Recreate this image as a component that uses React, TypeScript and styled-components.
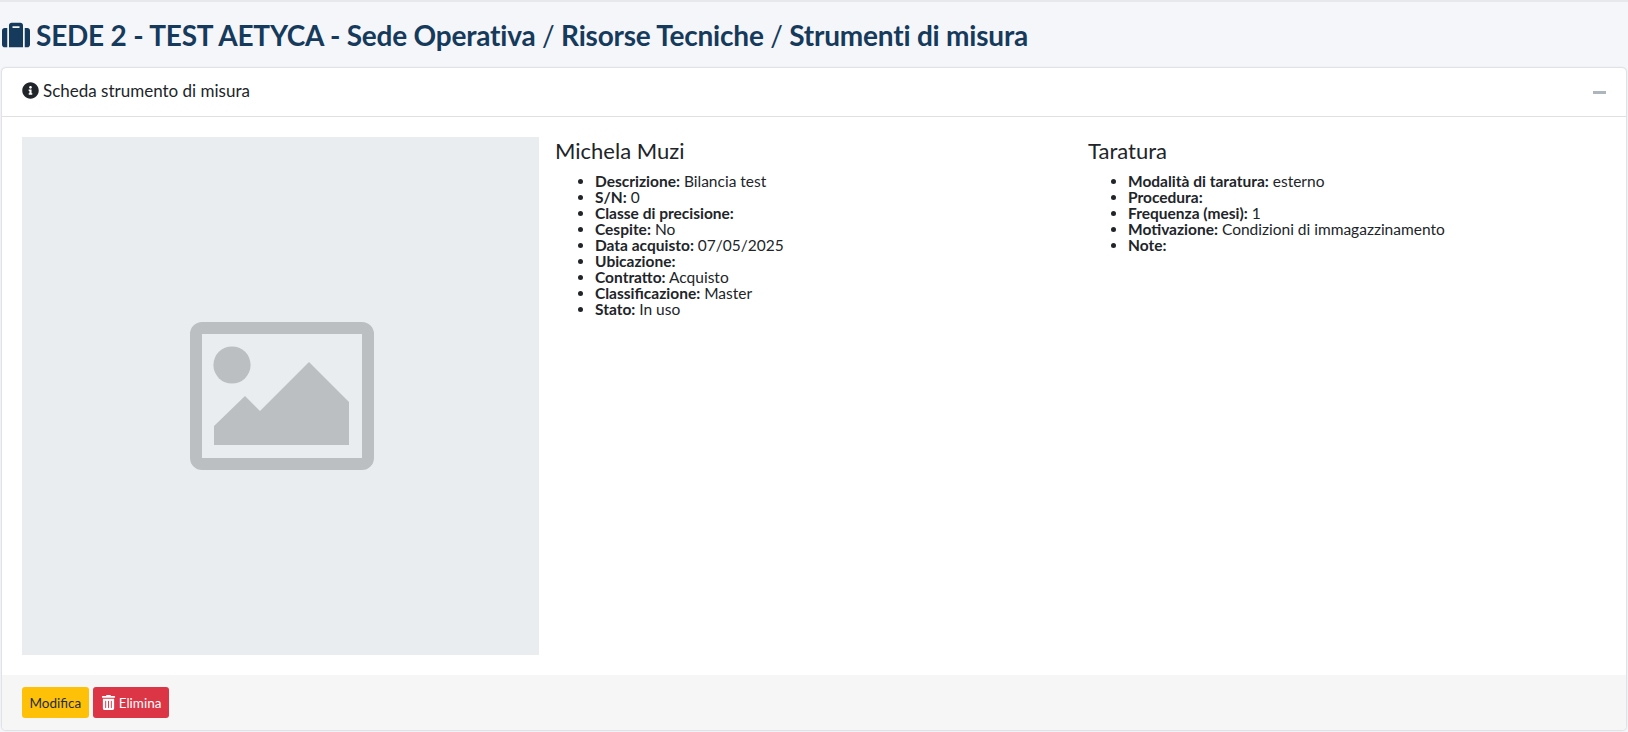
import React from 'react';
import styled, { createGlobalStyle } from 'styled-components';
import { FaSuitcase, FaInfoCircle, FaTrashAlt } from 'react-icons/fa';

const GlobalStyle = createGlobalStyle`
  html, body {
    margin: 0;
    padding: 0;
    background-color: #f4f6f9;
  }
  body {
    font-family: Lato, 'Noto Sans', sans-serif;
    color: #212529;
  }
`;

const Page = styled.div`
  width: 1628px;
  height: 732px;
  box-sizing: border-box;
  display: flex;
  flex-direction: column;
  border-top: 2px solid #e6e8ec;
  padding: 0 2px 2px;
  overflow: hidden;
`;

const PageTitle = styled.h1`
  margin: 0;
  height: 66px;
  display: flex;
  align-items: center;
  gap: 6px;
  font-size: 28px;
  font-weight: 700;
  letter-spacing: -0.21px;
  color: #163a5c;
  white-space: pre;
  flex: none;

  svg {
    font-size: 28px;
    flex: none;
  }
`;

const Light = styled.span`
  font-weight: 400;
`;

const Card = styled.section`
  flex: 1;
  display: flex;
  flex-direction: column;
  background: #fff;
  border-radius: 4px;
  box-shadow: 0 0 2px rgba(0, 0, 0, 0.3);
`;

const CardHeader = styled.header`
  height: 49px;
  flex: none;
  box-sizing: border-box;
  display: flex;
  align-items: center;
  justify-content: space-between;
  padding: 0 20px 3px;
  border-bottom: 1px solid #dfe0e1;
  font-size: 17px;
`;

const HeaderTitle = styled.div`
  display: flex;
  align-items: center;
  gap: 4px;

  svg {
    font-size: 17px;
  }
`;

const Collapse = styled.span`
  width: 13px;
  height: 3px;
  margin-top: 3px;
  background: #adb5bd;
`;

const CardBody = styled.div`
  flex: 1;
  display: grid;
  grid-template-columns: 517px 517px 518px;
  column-gap: 16px;
  align-content: start;
  padding: 20px 20px;
`;

const Placeholder = styled.div`
  height: 518px;
  background: #e9edf0;
  display: flex;
  align-items: center;
  justify-content: center;

  svg {
    margin-left: 2px;
  }
`;

const Info = styled.div``;

const InfoTitle = styled.h5`
  margin: 0 0 9px;
  font-size: 22px;
  font-weight: 400;
  line-height: 27px;
`;

const InfoList = styled.ul`
  margin: 0;
  padding: 0 0 0 40px;
  font-size: 15.5px;
  line-height: 16px;

  b {
    font-weight: 700;
  }
`;

const CardFooter = styled.footer`
  height: 55px;
  flex: none;
  box-sizing: border-box;
  display: flex;
  align-items: center;
  gap: 4px;
  padding: 0 20px;
  background: #f6f6f6;
  border-radius: 0 0 4px 4px;
`;

const Button = styled.button<{ $tone: 'warning' | 'danger' }>`
  height: 31px;
  box-sizing: border-box;
  border: 0;
  border-radius: 3px;
  padding: 0 ${({ $tone }) => ($tone === 'warning' ? '7.5px' : '8px')};
  display: flex;
  align-items: center;
  gap: 3px;
  font-family: inherit;
  font-size: 13.5px;
  background: ${({ $tone }) => ($tone === 'warning' ? '#ffc107' : '#dc3545')};
  color: ${({ $tone }) => ($tone === 'warning' ? '#1f2d3d' : '#fff')};

  svg {
    font-size: 15px;
  }
`;

const ImageIcon = () => (
  <svg width="184" height="148" viewBox="0 0 184 148">
    <rect x="6" y="6" width="172" height="136" rx="6" fill="none" stroke="#bbbfc2" strokeWidth="12" />
    <circle cx="42" cy="43" r="18.6" fill="#bbbfc2" />
    <polygon points="24,104 55,74 70,89 119,40 159,80 159,123 24,123" fill="#bbbfc2" />
  </svg>
);

const details = [
  ['Descrizione:', 'Bilancia test'],
  ['S/N:', '0'],
  ['Classe di precisione:', ''],
  ['Cespite:', 'No'],
  ['Data acquisto:', '07/05/2025'],
  ['Ubicazione:', ''],
  ['Contratto:', 'Acquisto'],
  ['Classificazione:', 'Master'],
  ['Stato:', 'In uso'],
];

const calibration = [
  ['Modalità di taratura:', 'esterno'],
  ['Procedura:', ''],
  ['Frequenza (mesi):', '1'],
  ['Motivazione:', 'Condizioni di immagazzinamento'],
  ['Note:', ''],
];

const Rows = ({ rows }: { rows: string[][] }) => (
  <InfoList>
    {rows.map(([label, value]) => (
      <li key={label}>
        <b>{label}</b> {value}
      </li>
    ))}
  </InfoList>
);

export default function App() {
  return (
    <>
      <GlobalStyle />
      <Page>
        <PageTitle>
          <FaSuitcase />
          <span>
            SEDE 2 - TEST AETYCA - Sede Operativa <Light>/</Light> Risorse Tecniche <Light>/</Light> Strumenti di misura
          </span>
        </PageTitle>
        <Card>
          <CardHeader>
            <HeaderTitle>
              <FaInfoCircle />
              Scheda strumento di misura
            </HeaderTitle>
            <Collapse />
          </CardHeader>
          <CardBody>
            <Placeholder>
              <ImageIcon />
            </Placeholder>
            <Info>
              <InfoTitle>Michela Muzi</InfoTitle>
              <Rows rows={details} />
            </Info>
            <Info>
              <InfoTitle>Taratura</InfoTitle>
              <Rows rows={calibration} />
            </Info>
          </CardBody>
          <CardFooter>
            <Button $tone="warning">Modifica</Button>
            <Button $tone="danger">
              <FaTrashAlt />
              Elimina
            </Button>
          </CardFooter>
        </Card>
      </Page>
    </>
  );
}
